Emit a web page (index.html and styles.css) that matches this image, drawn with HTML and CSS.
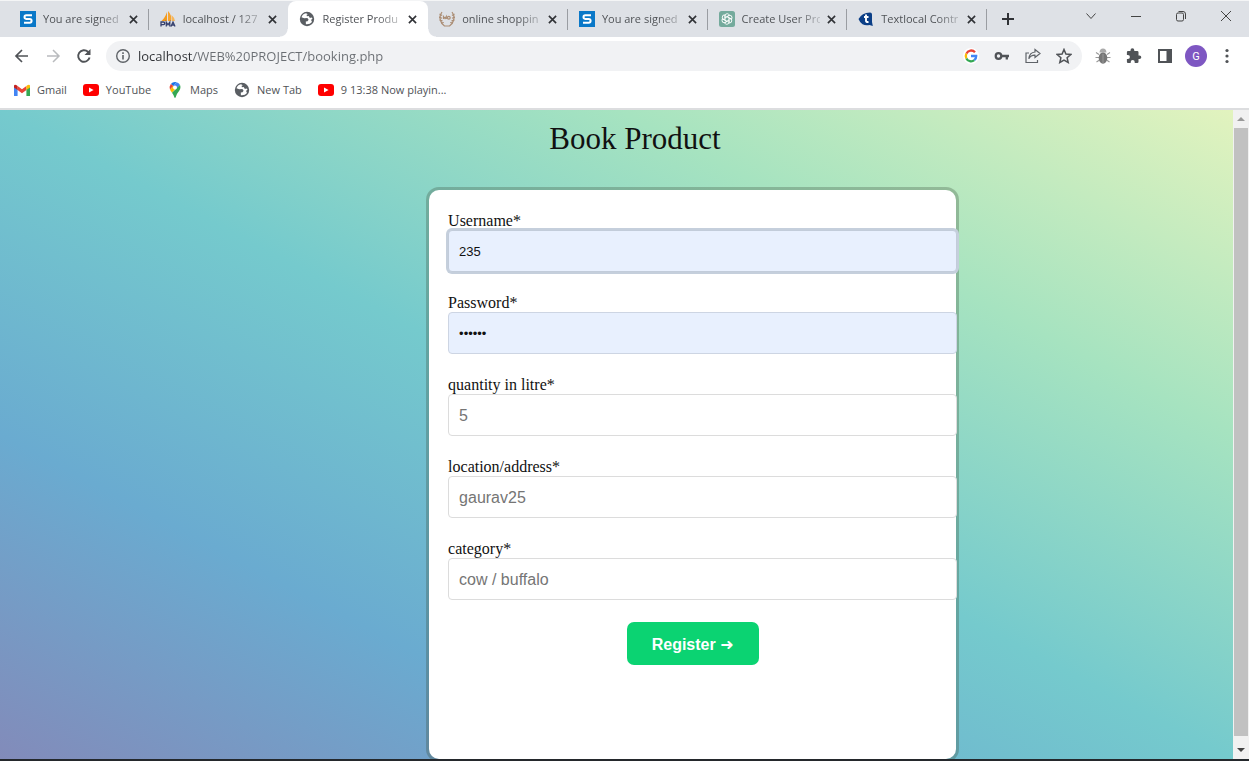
FILE: index.html
```html
<!DOCTYPE html>
<html lang="en">
<head>
<meta charset="utf-8">
<title>Register Product</title>
<link rel="stylesheet" href="styles.css">
</head>
<body>
<svg class="defs" aria-hidden="true">
  <symbol id="i-close" viewBox="0 0 10 10"><path d="M1 1l8 8M9 1L1 9" fill="none" stroke="#303236" stroke-width="1.8"/></symbol>
  <symbol id="i-s" viewBox="0 0 16 16"><path fill="#0a78c8" d="M0 0h16v16H0z"/><path d="M12 4.3H6.3Q4.5 4.3 4.5 6t1.8 1.9h3.4q1.9 0 1.9 1.9t-1.9 1.9H4" fill="none" stroke="#fff" stroke-width="2"/></symbol>
  <symbol id="i-globe" viewBox="0 0 16 16"><circle cx="8" cy="8" r="7.2" fill="#5a5e63"/><path d="M7 2.3Q3.500 3 2.500 6.300l2.700 1 3.200-.2 1.200 1.700-1.100 1.400-1.700.2.100 2.800Q11 13.600 13 11l-.9-2.100 1.500-1.700-1.100-.6-1.600.3-1.200-1.800-1.800.1-.3-1.500 1.300-.4z" fill="#fff"/></symbol>
  <symbol id="i-yt" viewBox="0 0 16 12"><rect width="16" height="12" rx="3" fill="#f00"/><path d="M6 3.400v5.200L10.600 6z" fill="#fff"/></symbol>
</svg>

<header class="browser">
  <div class="tabstrip">
    <nav class="tabs" aria-label="Tabs">
      <div class="tab"><svg class="fav"><use href="#i-s"/></svg><button class="tab-title">You are signed</button><button class="close" aria-label="Close tab"><svg><use href="#i-close"/></svg></button></div>
      <div class="tab nosep"><svg class="fav" viewBox="0 0 16 16"><path d="M7 1v9H1.500Q5 7 7 1z" fill="#f39a1d"/><path d="M8 0q4 4 3.200 10H8z" fill="#f8a32d"/><path d="M11.500 4q3 2.500 3.500 6h-3z" fill="#f6b65a"/><path d="M1 15.500V11h2.500q1.200 0 1.200 1.300T3.500 13.600H1M6.300 15.500V11.200L8 13.800l1.800-2.600v4.300M11 15.500l2-4.500 2 4.500M11.800 14h2.500" fill="none" stroke="#36406e" stroke-width="1.300"/></svg><button class="tab-title">localhost / 127</button><button class="close" aria-label="Close tab"><svg><use href="#i-close"/></svg></button></div>
      <div class="tab active"><svg class="fav"><use href="#i-globe"/></svg><button class="tab-title">Register Produ</button><button class="close" aria-label="Close tab"><svg><use href="#i-close"/></svg></button></div>
      <div class="tab"><svg class="fav" viewBox="0 0 16 16"><g fill="none" stroke="#ab8d74" stroke-width="1.200"><path d="M3 1Q0 5 1.500 9.500 2.500 13 5.500 15h5q3-2 4-5.500Q16 5 13 1"/><path d="M.5 3l2.500 1.500M0 6l3 1.200M.5 9l3 .8M2 12l2.800-.5M15.500 3L13 4.500M16 6l-3 1.200M15.500 9l-3 .8M14 12l-2.800-.5"/><path d="M4.500 8V5.500L6 7.500 7.300 5.500V8"/><circle cx="9.800" cy="6.700" r="1.400"/></g></svg><button class="tab-title">online shoppin</button><button class="close" aria-label="Close tab"><svg><use href="#i-close"/></svg></button></div>
      <div class="tab"><svg class="fav"><use href="#i-s"/></svg><button class="tab-title">You are signed</button><button class="close" aria-label="Close tab"><svg><use href="#i-close"/></svg></button></div>
      <div class="tab"><svg class="fav" viewBox="0 0 16 16"><rect width="16" height="16" rx="2.500" fill="#74aa9c"/><g fill="none" stroke="#fff" stroke-width=".9"><path id="petal" d="M6 8.900V4.800Q6.200 2.700 8.200 2.700q1.600 0 2.300 1.500L7.200 6.200"/><use href="#petal" transform="rotate(60 8 8)"/><use href="#petal" transform="rotate(120 8 8)"/><use href="#petal" transform="rotate(180 8 8)"/><use href="#petal" transform="rotate(240 8 8)"/><use href="#petal" transform="rotate(300 8 8)"/></g></svg><button class="tab-title">Create User Pro</button><button class="close" aria-label="Close tab"><svg><use href="#i-close"/></svg></button></div>
      <div class="tab"><svg class="fav" viewBox="0 0 16 16"><path d="M.5 8Q2 5 5 3.200 8 1.500 12 1.500q2 0 2 2V11l.8 4-3.300-1q-4 1-7-.8Q1.500 11 .5 8z" fill="#0c3f87"/><path d="M8 3.500v6.200q0 1.600 2.500 1.300M6 6h4.500" fill="none" stroke="#fff" stroke-width="1.900"/></svg><button class="tab-title">Textlocal Contr</button><button class="close" aria-label="Close tab"><svg><use href="#i-close"/></svg></button></div>
    </nav>
    <button class="newtab" aria-label="New tab"><svg viewBox="0 0 12 12"><path d="M6 0v12M0 6h12" stroke="#303236" stroke-width="2"/></svg></button>
    <div class="winctl">
      <button aria-label="Search tabs"><svg viewBox="0 0 12 12"><path d="M1.500 3.500L6 8.500l4.500-5" fill="none" stroke="#444" stroke-width="1"/></svg></button>
      <button aria-label="Minimize"><svg viewBox="0 0 12 12"><path d="M1 6.500h10" stroke="#444"/></svg></button>
      <button aria-label="Restore"><svg viewBox="0 0 12 12"><rect x="1.500" y="3" width="7" height="8" rx="1.500" fill="none" stroke="#444"/><path d="M3.500 1.500h4.500q2.500 0 2.500 2.500v5" fill="none" stroke="#444"/></svg></button>
      <button aria-label="Close"><svg viewBox="0 0 12 12"><path d="M1 1l10 10M11 1L1 11" stroke="#444"/></svg></button>
    </div>
  </div>

  <div class="toolbar">
    <button class="tool" aria-label="Back"><svg viewBox="0 0 16 16"><path d="M14 8H2.500M8 2L2 8l6 6" fill="none" stroke="#505357" stroke-width="1.700"/></svg></button>
    <button class="tool" aria-label="Forward"><svg viewBox="0 0 16 16"><path d="M2 8h11.500M8 2l6 6-6 6" fill="none" stroke="#b9bbbe" stroke-width="1.500"/></svg></button>
    <button class="tool" aria-label="Reload"><svg viewBox="0 0 16 16"><path d="M13.600 9.500A5.800 5.800 0 1 1 12 3.800l1.500 1.700" fill="none" stroke="#505357" stroke-width="1.900"/><path d="M14.500 1v6h-6z" fill="#505357"/></svg></button>
    <div class="omnibox">
      <svg class="ico" viewBox="0 0 16 16"><circle cx="8" cy="8" r="6.300" fill="none" stroke="#5f6368" stroke-width="1.400"/><path d="M8 7v4.500M8 4.300v1.600" stroke="#5f6368" stroke-width="1.600"/></svg>
      <input class="url" type="text" aria-label="Address" value="localhost/WEB%20PROJECT/booking.php">
      <div class="omni-actions">
        <button aria-label="Google"><svg viewBox="0 0 16 16"><circle cx="8" cy="8" r="8" fill="#fff"/><g fill="none" stroke-width="2.300"><path d="M12 4.200A5.200 5.200 0 0 0 3.400 5.600" stroke="#ea4335"/><path d="M3.400 5.600a5.200 5.200 0 0 0 0 4.800" stroke="#fbbc05"/><path d="M3.400 10.400a5.200 5.200 0 0 0 7.900 1.800" stroke="#34a853"/><path d="M11.300 12.200A5.200 5.200 0 0 0 13.200 8H8" stroke="#4285f4"/></g></svg></button>
        <button aria-label="Passwords"><svg viewBox="0 0 16 16"><circle cx="4.500" cy="8" r="2.800" fill="none" stroke="#505357" stroke-width="2.200"/><path d="M8 8h7M12.800 8v3.500" stroke="#505357" stroke-width="2.300"/></svg></button>
        <button aria-label="Share"><svg viewBox="0 0 16 16"><path d="M4 5H1v9.500h11.500V12M10 1.500l5 4-5 4V7.200Q6 7 3.800 10.800 4.500 4.500 10 4z" fill="none" stroke="#5f6368" stroke-width="1.200"/></svg></button>
        <button aria-label="Bookmark"><svg viewBox="0 0 16 16"><path d="M8 1.500l1.900 4.600 4.900.4-3.700 3.200 1.100 4.800L8 12l-4.200 2.500 1.100-4.800L1.200 6.500l4.900-.4z" fill="none" stroke="#505357" stroke-width="1.500"/></svg></button>
      </div>
    </div>
    <div class="extensions">
      <button aria-label="Bug extension"><svg viewBox="0 0 16 16"><path d="M1 4.500l3 2M15 4.500l-3 2M.5 9.500H4M15.500 9.500H12M1.500 14l3-2M14.500 14l-3-2" stroke="#999" stroke-width="1.100"/><ellipse cx="8" cy="10" rx="4.300" ry="5.800" fill="#777"/><path d="M4.500 4.500Q4.800.500 8 .500t3.500 4z" fill="#aaa"/><path d="M8 6v9" stroke="#999"/></svg></button>
      <button aria-label="Extensions"><svg viewBox="0 0 16 16"><path d="M13.500 7.500h-1V4.300q0-1.300-1.300-1.300H8.300V2.200a1.900 1.900 0 0 0-3.800 0V3H2Q.900 3 .900 4.300V7h1a2 2 0 0 1 0 4h-1v2.700Q.900 15 2 15h2.700v-1a2 2 0 0 1 4 0v1h2.500q1.300 0 1.300-1.300v-2.600h1a1.800 1.800 0 0 0 0-3.600z" fill="#505357"/></svg></button>
      <button aria-label="Side panel"><svg viewBox="0 0 16 16"><path d="M1 1h14v14H1zM3 3v10h6.500V3z" fill="#505357" fill-rule="evenodd"/></svg></button>
      <button class="avatar" aria-label="Profile">G</button>
      <button aria-label="Menu"><svg viewBox="0 0 16 16"><g fill="#505357"><circle cx="8" cy="2.500" r="1.600"/><circle cx="8" cy="8" r="1.600"/><circle cx="8" cy="13.500" r="1.600"/></g></svg></button>
    </div>
  </div>

  <nav class="bookmarks" aria-label="Bookmarks">
    <a href="#"><svg viewBox="0 0 16 12"><path d="M0 1.500V12h3.600V5z" fill="#4285f4"/><path d="M16 1.500V12h-3.600V5z" fill="#34a853"/><path d="M3.600 2v4L8 9.300 12.400 6V2L8 5.300z" fill="#ea4335"/><path d="M0 1.800Q.5-.6 3.600 2v4L0 3.500z" fill="#c5221f"/><path d="M16 1.800Q15.500-.6 12.400 2v4L16 3.500z" fill="#fbbc04"/></svg>Gmail</a>
    <a href="#"><svg><use href="#i-yt"/></svg>YouTube</a>
    <a href="#"><svg class="tall" viewBox="0 0 16 16"><path d="M8 0a5.500 5.500 0 0 0-4.200 2l2.600 2.100L9.600.3z" fill="#1a73e8"/><path d="M3.800 2Q2 4.500 3 7.500l3.400-3.400z" fill="#ea4335"/><path d="M3 7.500q.6 1.500 2 3.200l5-5.800-3.600-.8z" fill="#fbbc04"/><path d="M9.600.3L6.400 4.100l3.300 2.800L13 3Q12 .9 9.600.3z" fill="#4285f4"/><path d="M13 3q1.200 3-.8 5.800Q9.500 12 8.700 15.300 8 16.700 7.300 15.300 6.500 12.500 5 10.700z" fill="#34a853"/><circle cx="8" cy="5.500" r="2" fill="#fff"/></svg>Maps</a>
    <a href="#"><svg class="tall"><use href="#i-globe"/></svg>New Tab</a>
    <a href="#"><svg><use href="#i-yt"/></svg>9 13:38 Now playin...</a>
  </nav>
</header>

<div class="viewport">
  <main class="page">
    <h1>Book Product</h1>
    <form class="card">
      <div class="field"><label for="user">Username*</label><input class="filled focused" id="user" type="text" value="235"></div>
      <div class="field"><label for="pass">Password*</label><input class="filled" id="pass" type="password" value="secret"></div>
      <div class="field"><label for="qty">quantity in litre*</label><input id="qty" type="text" placeholder="5"></div>
      <div class="field"><label for="loc">location/address*</label><input id="loc" type="text" placeholder="gaurav25"></div>
      <div class="field"><label for="cat">category*</label><input id="cat" type="text" placeholder="cow / buffalo"></div>
      <button class="register" type="button">Register ➜</button>
    </form>
  </main>
  <div class="scrollbar" aria-hidden="true">
    <svg viewBox="0 0 8 4"><path d="M0 4l4-4 4 4z" fill="#999"/></svg>
    <div class="thumb"></div>
    <svg viewBox="0 0 8 4"><path d="M0 0l4 4 4-4z" fill="#444"/></svg>
  </div>
</div>
</body>
</html>
```
FILE: styles.css
```css
* { box-sizing: border-box; }

body {
  margin: 0;
  min-height: 100vh;
  display: flex;
  flex-direction: column;
  border-bottom: 2px solid #24282c;
  font-family: "Open Sans", "Noto Sans", sans-serif;
  font-size: 11px;
  color: #505357;
  background: #fff;
}

button {
  padding: 0;
  border: 0;
  background: none;
  font: inherit;
  color: inherit;
}

svg { display: block; flex: none; }
.defs { position: absolute; width: 0; height: 0; }

/* Browser chrome */
.browser { border-bottom: 2px solid #dcdddf; }

.tabstrip {
  display: flex;
  height: 37px;
  padding-left: 9px;
  border-top: 1px solid #f4f5f6;
  background: #dee1e6;
}

.tabs { display: flex; flex: 0 1 978px; min-width: 0; }

.tab {
  position: relative;
  display: flex;
  flex: 1;
  min-width: 0;
  align-items: center;
  gap: 7px;
  padding: 0 11px;
}

.tab::after {
  content: "";
  position: absolute;
  right: 0;
  top: 8px;
  width: 1px;
  height: 21px;
  background: #9a9da2;
}

.tab.nosep::after { display: none; }

.tab.active { background: #fff; border-radius: 8px 8px 0 0; }

/* Curved feet of the active tab */
.tab.active::before,
.tab.active::after {
  content: "";
  position: absolute;
  top: auto;
  bottom: 0;
  width: 8px;
  height: 8px;
}
.tab.active::before {
  left: -8px;
  background: radial-gradient(circle at 0 0, transparent 7px, #fff 8px);
}
.tab.active::after {
  right: -8px;
  background: radial-gradient(circle at 100% 0, transparent 7px, #fff 8px);
}

.fav { width: 16px; height: 16px; }

.tab-title {
  flex: 1;
  min-width: 0;
  white-space: nowrap;
  text-align: left;
  line-height: 18px;
  -webkit-mask-image: linear-gradient(90deg, #000 70%, transparent 110%);
  mask-image: linear-gradient(90deg, #000 70%, transparent 110%);
}

.close svg { width: 9px; height: 9px; }

.newtab { margin-left: 15px; }
.newtab svg { width: 12px; height: 12px; }

.winctl {
  display: flex;
  gap: 33px;
  margin-left: auto;
  padding: 0 17px 6px 0;
}
.winctl svg { width: 12px; height: 12px; }

.toolbar {
  display: flex;
  align-items: center;
  gap: 15px;
  padding: 4px 14px 2px;
}

.tool svg { width: 16px; height: 16px; }

.omnibox {
  display: flex;
  flex: 1;
  align-items: center;
  gap: 7px;
  height: 30px;
  margin-left: -1px;
  padding: 0 10px 0 9px;
  border-radius: 15px;
  background: #f1f2f4;
}

.ico { width: 16px; height: 16px; }

.url {
  flex: 1;
  min-width: 0;
  padding: 0;
  border: 0;
  outline: 0;
  font: 13px/20px "Open Sans", "Noto Sans", sans-serif;
  color: transparent;
  background: linear-gradient(90deg, #303236 55px, #6a6e73 55px);
  -webkit-background-clip: text;
  background-clip: text;
}

.omni-actions, .extensions { display: flex; align-items: center; gap: 15px; }
.omni-actions svg, .extensions svg { width: 16px; height: 16px; }

.extensions { margin-left: -2px; }
.extensions .avatar {
  width: 22px;
  height: 22px;
  margin: 0 -3px;
  border-radius: 50%;
  background: #7e57c2;
  color: #fff;
  font-family: Roboto, sans-serif;
}

.bookmarks {
  display: flex;
  gap: 16px;
  height: 35px;
  padding: 0 14px 2px;
  align-items: center;
}

.bookmarks a {
  display: flex;
  align-items: center;
  gap: 7px;
  color: inherit;
  text-decoration: none;
}

.bookmarks svg { width: 16px; height: 12px; }
.bookmarks svg.tall { height: 16px; }

/* Page */
.viewport { display: flex; flex: 1; }

.page {
  flex: 1;
  display: flex;
  flex-direction: column;
  background: linear-gradient(to right top, #828bba, #6aabd0, #75cacd, #a6e3c0, #e2f3be);
  font-family: "Liberation Serif", serif;
  color: #111;
}

h1 {
  margin: 10px 0 32px;
  padding-left: 37px;
  font-size: 31px;
  font-weight: 400;
  line-height: 38px;
  text-align: center;
}

.card {
  flex: 1;
  width: 42.75%;
  margin-left: 34.8%;
  padding: 22px 19px;
  border-radius: 10px;
  background: #fff;
  box-shadow: 0 0 0 3px rgba(60, 80, 60, 0.3);
}

.field {
  display: flex;
  flex-direction: column;
  margin: 0 -20px 22px 0;
}

label { font-size: 16px; line-height: 18px; }

.field input {
  width: 100%;
  height: 42px;
  padding: 2px 10px 0;
  border: 1px solid #dcdcdc;
  border-radius: 4px;
  outline: 0;
  background: #fff;
  font: 16px "Liberation Sans", Arial, sans-serif;
  color: #111;
}

.field input::placeholder { color: #757575; }

.field input.filled {
  padding-top: 0;
  border-color: #cdd5e3;
  background: #e8f0fe;
  font-size: 13px;
}

.field input.focused {
  border-color: #c2ccda;
  box-shadow: 0 0 0 2px #c5cfdc;
}

.register {
  display: block;
  width: 132px;
  height: 43px;
  margin: 0 auto;
  padding-top: 2px;
  border-radius: 7px;
  background: #0bd372;
  color: #fff;
  font: bold 16px "Liberation Sans", "DejaVu Sans", sans-serif;
}

.scrollbar {
  display: flex;
  flex-direction: column;
  align-items: center;
  gap: 7px;
  width: 16px;
  padding: 7px 1px;
  background: #f1f1f1;
}

.scrollbar svg { width: 8px; height: 4px; }
.thumb { flex: 1; align-self: stretch; margin-bottom: 5px; background: #c1c1c1; }
```
